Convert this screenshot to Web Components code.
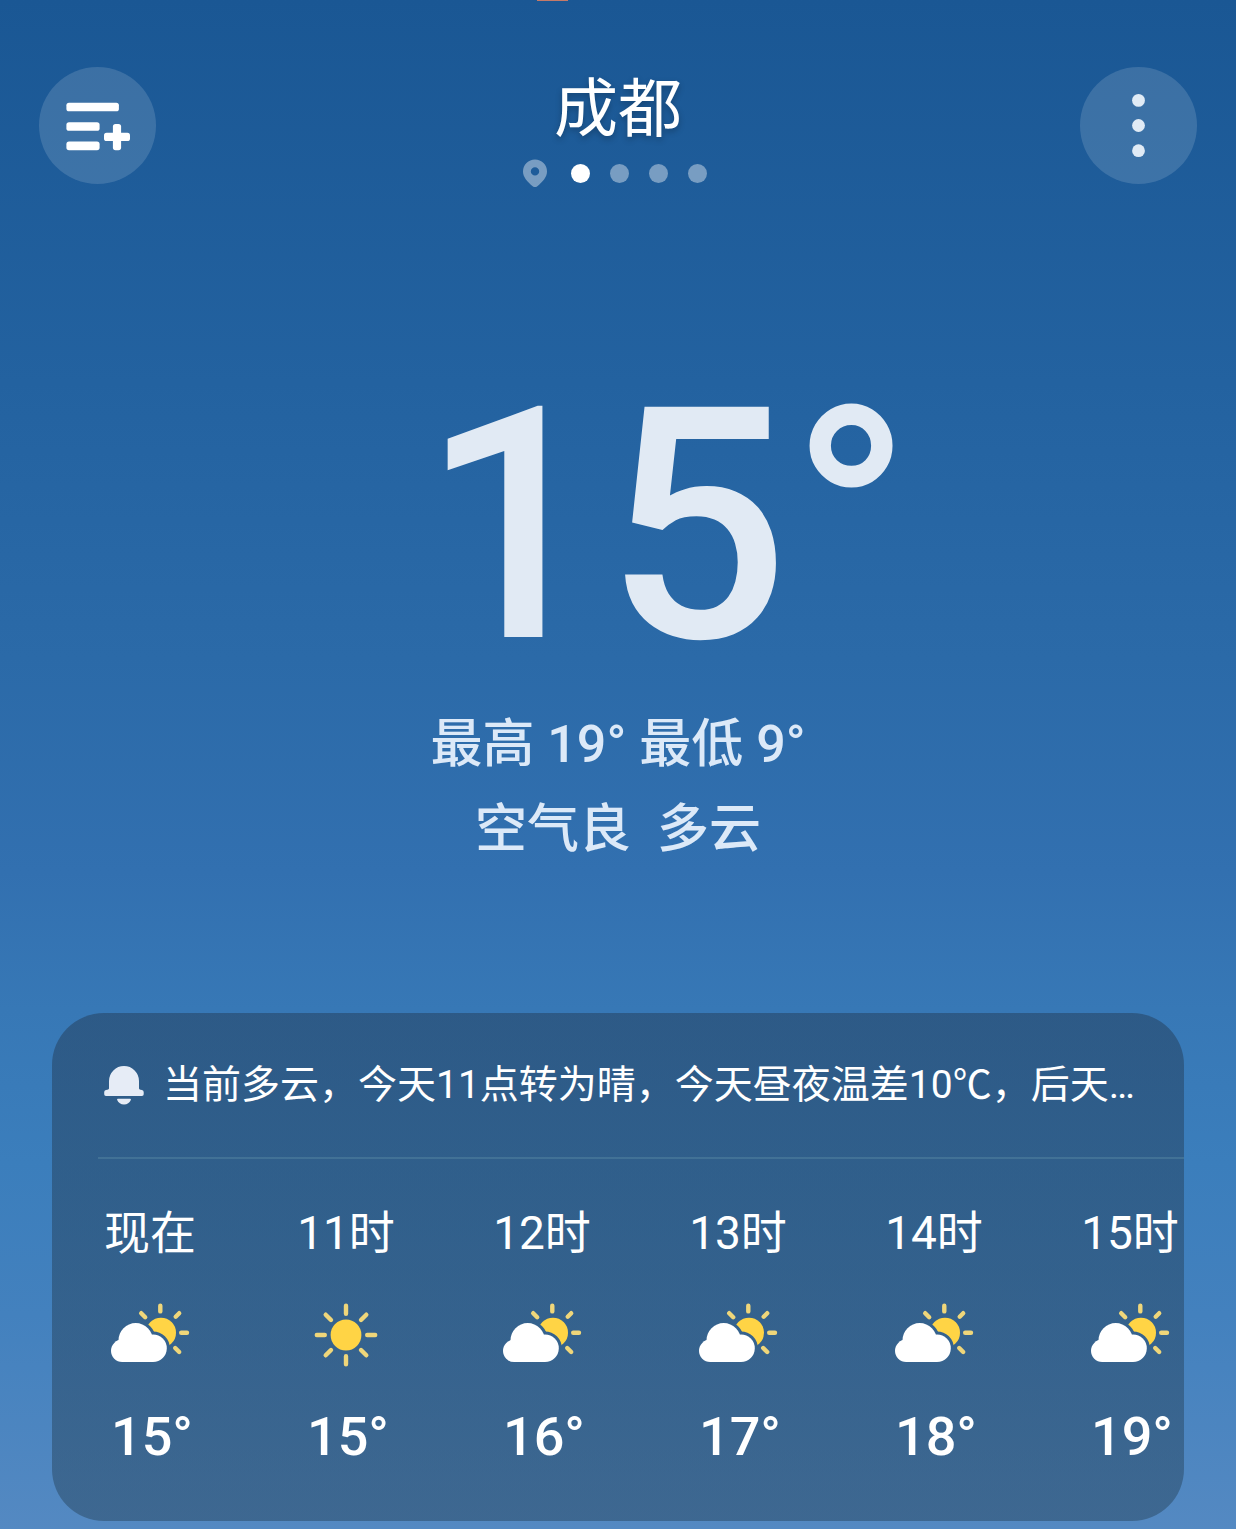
<!DOCTYPE html>
<html lang="zh-CN">
<head>
<meta charset="utf-8">
<meta name="viewport" content="width=device-width, initial-scale=1">
<title>成都天气</title>
<style>
  body {
    margin: 0;
    min-height: 100vh;
    background: linear-gradient(#1a5794 0%, #2362a0 25%, #2b6aa8 43%, #3270b0 57%, #3778b6 66%, #3b7ebc 76%, #4381be 86%, #5489c2 100%);
    color: #fff;
    font-family: Roboto, "Noto Sans CJK SC", sans-serif;
  }
</style>
</head>
<body>
<weather-app>
  <weather-header slot="header" city="成都" pages="4"></weather-header>
  <current-weather slot="current" temp="15" high="19" low="9" air="空气良" sky="多云"></current-weather>
  <forecast-card slot="forecast">
    <span slot="alert">当前多云，今天11点转为晴，今天昼夜温差10℃，后天…</span>
    <hour-item time="现在" icon="cloudy" temp="15"></hour-item>
    <hour-item time="11时" icon="sunny" temp="15"></hour-item>
    <hour-item time="12时" icon="cloudy" temp="16"></hour-item>
    <hour-item time="13时" icon="cloudy" temp="17"></hour-item>
    <hour-item time="14时" icon="cloudy" temp="18"></hour-item>
    <hour-item time="15时" icon="cloudy" temp="19"></hour-item>
  </forecast-card>
</weather-app>

<script>
class WeatherApp extends HTMLElement {
  constructor() {
    super();
    this.attachShadow({mode: 'open'}).innerHTML = `
      <style>
        :host {
          display: block;
          position: relative;
          overflow: hidden;
        }

        /* edge of the status bar indicator */
        .status {
          position: absolute;
          top: 0;
          left: 537px;
          width: 31px;
          height: 1px;
          background: #c57a68;
        }

        main {
          display: flex;
          flex-direction: column;
        }
      </style>
      <div class="status"></div>
      <slot name="header"></slot>
      <main>
        <slot name="current"></slot>
        <slot name="forecast"></slot>
      </main>
    `;
  }
}

class WeatherHeader extends HTMLElement {
  constructor() {
    super();
    this.attachShadow({mode: 'open'});
  }

  connectedCallback() {
    this.shadowRoot.innerHTML = this.getTemplate();
  }

  getDots() {
    const count = Number(this.getAttribute('pages'));
    return Array.from({length: count}, (_, i) => `<i class="${i === 0 ? 'active' : ''}"></i>`).join('');
  }

  getTemplate() {
    return `
      <style>
        :host {
          display: block;
          padding: 67px 39px 0;
        }

        header {
          display: grid;
          grid-template-columns: 117px 1fr 117px;
        }

        button {
          width: 117px;
          height: 117px;
          padding: 0;
          border: 0;
          border-radius: 50%;
          background: rgba(255, 255, 255, 0.14);
          color: #fff;
        }

        svg {
          display: block;
        }

        h1 {
          margin: 0;
          font-size: 64px;
          line-height: 86px;
          font-weight: 400;
          text-align: center;
          text-shadow: 0 3px 6px rgba(0, 0, 0, 0.25);
        }

        .pages {
          display: flex;
          align-items: center;
          justify-content: center;
          gap: 20px;
          margin-top: 6px;
          padding-right: 6px;
        }

        .pages svg {
          margin-right: 4px;
        }

        i {
          width: 19px;
          height: 19px;
          border-radius: 50%;
          background: #fff;
          opacity: 0.4;
        }

        i.active {
          opacity: 1;
        }
      </style>
      <header>
        <button type="button" aria-label="城市管理">
          <svg width="117" height="117" fill="currentColor">
            <rect x="27.400" y="35.700" width="52.500" height="8.600" rx="2.600"/>
            <rect x="27.400" y="55.200" width="33.200" height="8.600" rx="2.600"/>
            <rect x="27.400" y="74.600" width="33.200" height="8.600" rx="2.600"/>
            <rect x="65" y="65.700" width="26" height="8.400" rx="2.600"/>
            <rect x="73.900" y="57" width="8.200" height="26.200" rx="2.600"/>
          </svg>
        </button>
        <div>
          <h1>${this.getAttribute('city')}</h1>
          <div class="pages">
            <svg width="24" height="28" fill="#fff" opacity="0.4">
              <path fill-rule="evenodd" d="M12 .5a12 12 0 0 1 12 12c0 5.500-4 10-10 15q-2 1.400-4 0C4 22.500 0 18 0 12.500A12 12 0 0 1 12 .5zm0 7.700a4.200 4.200 0 1 0 0 8.400 4.200 4.200 0 1 0 0-8.400z"/>
            </svg>
            ${this.getDots()}
          </div>
        </div>
        <button type="button" aria-label="更多">
          <svg width="117" height="117" fill="#e1ebf5">
            <circle cx="58.500" cy="33.400" r="6.400"/>
            <circle cx="58.500" cy="58.500" r="6.400"/>
            <circle cx="58.500" cy="83.700" r="6.400"/>
          </svg>
        </button>
      </header>
    `;
  }
}

class CurrentWeather extends HTMLElement {
  constructor() {
    super();
    this.attachShadow({mode: 'open'});
  }

  connectedCallback() {
    this.shadowRoot.innerHTML = this.getTemplate();
  }

  getTemplate() {
    return `
      <style>
        :host {
          display: block;
          padding-top: 177px;
          color: #e1eaf4;
          font-weight: 500;
          text-align: center;
        }

        /* digits stay centred, the degree sign hangs to the right */
        .temp {
          display: grid;
          grid-template-columns: 1fr auto 1fr;
          padding-right: 26px;
          font-size: 324px;
          line-height: 324px;
        }

        .degree {
          grid-column: 3;
          text-align: left;
        }

        .digits {
          grid-column: 2;
        }

        p {
          margin: 0;
          font-size: 52px;
          line-height: 85px;
          color: #dce9f8;
          white-space: pre;
        }

        .range {
          margin-top: 14px;
        }
      </style>
      <div class="temp"><span class="digits">${this.getAttribute('temp')}</span><span class="degree">°</span></div>
      <p class="range">最高 ${this.getAttribute('high')}° 最低 ${this.getAttribute('low')}°</p>
      <p>${this.getAttribute('air')}  ${this.getAttribute('sky')}</p>
    `;
  }
}

class ForecastCard extends HTMLElement {
  constructor() {
    super();
    this.attachShadow({mode: 'open'}).innerHTML = `
      <style>
        :host {
          display: block;
          margin: 141px 52px 8px;
          border-radius: 52px;
          background: linear-gradient(rgba(34, 57, 83, 0.48), rgba(38, 68, 92, 0.48));
          overflow: hidden;
        }

        .alert {
          display: flex;
          align-items: center;
          gap: 19px;
          height: 144px;
          padding: 0 52px;
          font-size: 39px;
          white-space: nowrap;
        }

        .alert slot {
          display: block;
          padding-bottom: 8px;
        }

        svg {
          flex: none;
        }

        hr {
          height: 2px;
          margin: 0 0 0 46px;
          border: 0;
          background: rgba(130, 180, 190, 0.22);
        }

        .hours {
          display: flex;
          padding: 44px 0 54px;
        }
      </style>
      <div class="alert">
        <svg width="40" height="40" fill="#e6ecf6">
          <path d="M5 16a15 15 0 0 1 30 0v7.500q0 1 1.500 1.200l1.500.2q1.700.3 1.700 2v2.300q0 1.800-1.800 1.800H2Q.2 31 .2 29.200v-2.300q0-1.700 1.700-2l1.500-.2Q5 24.500 5 23.500z"/>
          <path d="M14 33.700h12q1.300 0 .8 1.300a7.400 7.400 0 0 1-13.600 0q-.5-1.300.8-1.300z"/>
        </svg>
        <slot name="alert"></slot>
      </div>
      <hr>
      <div class="hours"><slot></slot></div>
    `;
  }
}

const ICONS = {
  sunny: `
    <circle cx="40" cy="32" r="15.400" fill="#ffd445"/>
    <path class="rays" d="M40 2.800v8M40 53.200v8M10.800 32h8M61.200 32h8M19.700 11.700l5.300 5.300M55 47l5.300 5.300M60.300 11.700L55 17M25 47l-5.300 5.300"/>
  `,
  cloudy: `
    <mask id="gap">
      <rect width="80" height="64" fill="#fff"/>
      <g fill="#000" stroke="#000" stroke-width="6">
        <circle cx="25.700" cy="37.300" r="17.200"/>
        <circle cx="43" cy="45.200" r="13.800"/>
      </g>
    </mask>
    <circle cx="51" cy="29.700" r="15" fill="#ffd445" mask="url(#gap)"/>
    <path class="rays" d="M50.300 2.800v5.600M71.200 29.700h5.800M69.200 10.200l-3.500 3.500M31.200 10.200l4 4M65.200 45l4 4"/>
    <g fill="#fff">
      <circle cx="25.700" cy="37.300" r="17.200"/>
      <circle cx="43" cy="45.200" r="13.800"/>
      <circle cx="12.200" cy="47.800" r="11.200"/>
      <path d="M12 40h31v19H12z"/>
    </g>
  `
};

class HourItem extends HTMLElement {
  constructor() {
    super();
    this.attachShadow({mode: 'open'});
  }

  connectedCallback() {
    this.shadowRoot.innerHTML = this.getTemplate();
  }

  getTemplate() {
    return `
      <style>
        :host {
          display: flex;
          flex: 0 0 196px;
          flex-direction: column;
          align-items: center;
          gap: 40px;
          line-height: 60px;
          white-space: nowrap;
        }

        .time {
          font-size: 46px;
        }

        .temp {
          padding-left: 4px;
          font-size: 54px;
          font-weight: 500;
        }

        .rays {
          fill: none;
          stroke: #efd67a;
          stroke-width: 4.4;
          stroke-linecap: round;
        }
      </style>
      <span class="time">${this.getAttribute('time')}</span>
      <svg width="80" height="64">${ICONS[this.getAttribute('icon')]}</svg>
      <span class="temp">${this.getAttribute('temp')}°</span>
    `;
  }
}

customElements.define('weather-app', WeatherApp);
customElements.define('weather-header', WeatherHeader);
customElements.define('current-weather', CurrentWeather);
customElements.define('forecast-card', ForecastCard);
customElements.define('hour-item', HourItem);
</script>
</body>
</html>
